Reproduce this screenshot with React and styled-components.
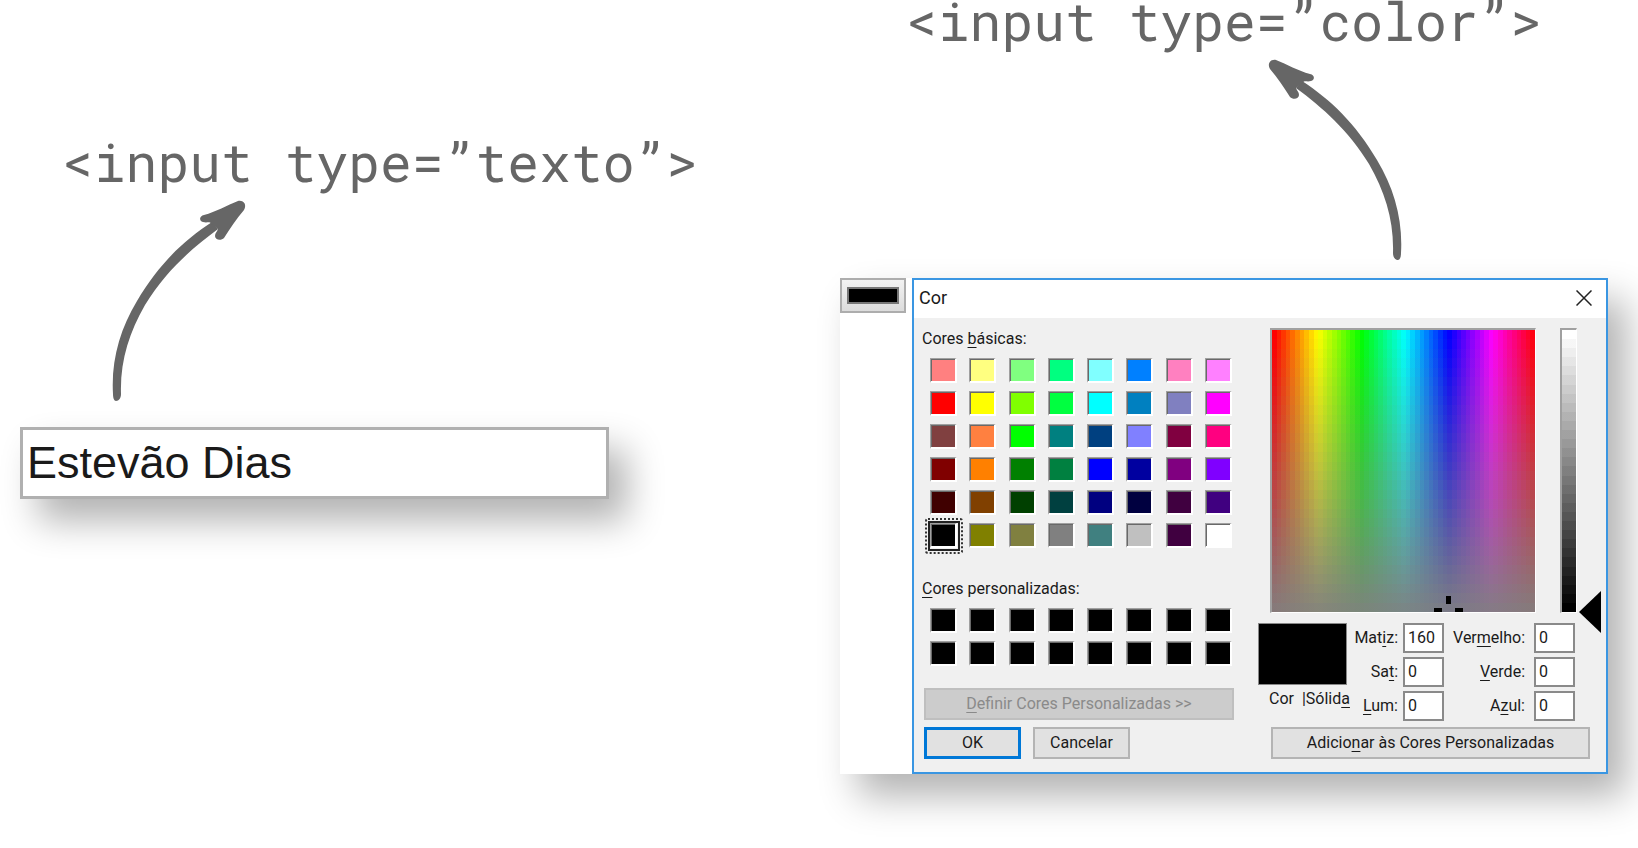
import React, { useState } from "react";
import styled, { createGlobalStyle } from "styled-components";

const GlobalStyle = createGlobalStyle`
  *, *::before, *::after { box-sizing: border-box; }
  body { margin: 0; background: #fff; color: #1a1a1a; }
  button, input { font: inherit; color: inherit; margin: 0; }
`;

const Page = styled.main`
  display: grid;
  grid-template-columns: 589fr 768fr;
  column-gap: 231px;
  align-items: start;
  min-height: 100vh;
  padding: 0 30px 0 20px;
`;

const Example = styled.section`
  min-width: 0;
  padding-top: ${(p) => p.$top}px;
`;

const Code = styled.h2`
  margin: 0 0 9px;
  padding-left: ${(p) => p.$indent}px;
  font: 400 53px/41px "Roboto Mono", "Liberation Mono", monospace;
  color: #666;
  white-space: nowrap;
`;

const ArrowDrawing = styled.svg`
  display: block;
  margin-left: ${(p) => p.$indent}%;
  color: #666;
`;

const shadow = "18px 22px 36px rgba(0, 0, 0, 0.3)";

const NameInput = styled.input`
  display: block;
  width: 100%;
  height: 72px;
  margin-top: 16px;
  padding: 0 4px;
  border: 3px solid #b0b0b0;
  border-radius: 0;
  background: #fff;
  box-shadow: ${shadow};
  font: 400 45px/54px "Liberation Sans", Arial, sans-serif;
  outline: none;
`;

const Picker = styled.div`
  display: flex;
  align-items: flex-start;
  gap: 6px;
  margin-top: 8px;
  background: #fff;
  box-shadow: ${shadow};
  font: 400 16px/20px Roboto, "Segoe UI", sans-serif;
`;

const ColorInput = styled.input`
  appearance: none;
  flex: none;
  width: 66px;
  height: 35px;
  padding: 0;
  border: 2px solid #adadad;
  background: linear-gradient(#f2f2f2, #dcdcdc);
  &::-webkit-color-swatch-wrapper { padding: 7px 5px; }
  &::-webkit-color-swatch { border: 2px solid #777; border-radius: 0; }
`;

const Dialog = styled.div`
  flex: 1;
  min-width: 0;
  border: 2px solid #3a96e2;
  background: #f0f0f0;
`;

const TitleBar = styled.header`
  display: flex;
  align-items: center;
  justify-content: space-between;
  height: 38px;
  padding: 0 14px 2px 5px;
  background: #fff;
`;

const Title = styled.h3`
  margin: 0;
  font: inherit;
  font-size: 18px;
`;

const CloseButton = styled.button`
  display: flex;
  padding: 0;
  border: 0;
  background: none;
`;

const Body = styled.div`
  display: grid;
  grid-template-columns: 310fr 343fr;
  column-gap: 24px;
  padding: 10px 5px 13px 10px;
`;

const Pane = styled.div`
  display: flex;
  flex-direction: column;
  min-width: 0;
`;

const GroupLabel = styled.h4`
  margin: ${(p) => p.$top}px 0 9px -2px;
  font: inherit;
`;

const Swatches = styled.div`
  display: grid;
  grid-template-columns: repeat(8, 27px);
  justify-content: space-between;
  row-gap: 8px;
  padding: 0 2px 0 6px;
`;

const Swatch = styled.button`
  position: relative;
  height: 25px;
  padding: 0;
  border: solid;
  border-width: 1px 2px 2px 1px;
  border-color: #a0a0a0 #fff #fff #a0a0a0;
  background: ${(p) => p.$color};
  box-shadow: inset 1px 1px #696969;
  &[aria-pressed="true"]::before {
    content: "";
    position: absolute;
    inset: -3px -5px -5px -3px;
    border: 2px solid #222;
  }
  &[aria-pressed="true"]::after {
    content: "";
    position: absolute;
    inset: -6px -8px -8px -6px;
    border: 2px dotted #333;
    border-radius: 3px;
  }
`;

const Button = styled.button`
  height: 32px;
  padding: 0 12px;
  border: ${(p) => (p.$primary ? "3px solid #0078d7" : "2px solid #b4b4b4")};
  background: #e1e1e1;
  margin: ${(p) => p.$margin || "0"};
  &:disabled {
    border-color: #bfbfbf;
    background: #ccc;
    color: #8a8a8a;
  }
`;

const Actions = styled.div`
  display: grid;
  grid-template-columns: 97fr 97fr 92fr;
  column-gap: 12px;
  margin-top: 7px;
`;

const Mixer = styled.div`
  display: flex;
  height: 285px;
  padding: 0 24px 0 12px;
`;

const Well = styled.div`
  position: relative;
  border: solid;
  border-width: 2px 1px 1px 2px;
  border-color: #a0a0a0 #fff #fff #a0a0a0;
`;

const Spectrum = styled(Well)`
  flex: 1;
  margin-right: 24px;
  background: ${(p) => p.$fade}, ${(p) => p.$hues};
`;

const Luminance = styled(Well)`
  width: 17px;
  background: ${(p) => p.$steps};
`;

const Crosshair = styled.svg`
  position: absolute;
  right: 72px;
  bottom: 0;
`;

const Pointer = styled.svg`
  position: absolute;
  left: 17px;
  bottom: -21px;
`;

const Values = styled.div`
  display: grid;
  grid-template-columns: 92px 94fr 131fr;
  margin: 10px 26px 6px 0;
`;

const Preview = styled.div`
  width: 89px;
  height: 62px;
  margin-bottom: 4px;
  border: 1px solid #888;
  background: #000;
`;

const PreviewLabel = styled.div`
  padding-left: 11px;
  white-space: pre;
`;

const Fields = styled.div`
  display: grid;
  grid-template-columns: 1fr 41px;
  grid-auto-rows: 30px;
  gap: 4px ${(p) => p.$gap}px;
  align-items: center;
`;

const FieldLabel = styled.label`
  text-align: right;
  white-space: nowrap;
`;

const ValueInput = styled.input`
  width: 100%;
  height: 30px;
  padding: 0 3px 1px;
  border: 2px solid #8a8a8a;
  border-radius: 0;
  background: #fff;
`;

const Key = styled.u`
  text-decoration-thickness: 1px;
  text-underline-offset: 3px;
`;

const basicColors = [
  ["#ff8080", "#ffff80", "#80ff80", "#00ff80", "#80ffff", "#0080ff", "#ff80c0", "#ff80ff"],
  ["#ff0000", "#ffff00", "#80ff00", "#00ff40", "#00ffff", "#0080c0", "#8080c0", "#ff00ff"],
  ["#804040", "#ff8040", "#00ff00", "#008080", "#004080", "#8080ff", "#800040", "#ff0080"],
  ["#800000", "#ff8000", "#008000", "#008040", "#0000ff", "#0000a0", "#800080", "#8000ff"],
  ["#400000", "#804000", "#004000", "#004040", "#000080", "#000040", "#400040", "#400080"],
  ["#000000", "#808000", "#808040", "#808080", "#408080", "#c0c0c0", "#400040", "#ffffff"],
].flat();

const customColors = Array(16).fill("#000000");

// A gradient of flat bands, as the dialog paints its hue, saturation and luminance.
const bands = (direction, count, color) =>
  `linear-gradient(${direction}, ${Array.from({ length: count }, (_, i) =>
    `${color(i / (count - 1))} ${(i * 100) / count}% ${((i + 1) * 100) / count}%`
  ).join(", ")})`;

const hues = bands("to right", 57, (t) => `hsl(${t * 356} 100% 50%)`);
const fade = bands("to bottom", 30, (t) => `rgb(128 128 128 / ${t * 0.95})`);
const luminances = bands("to bottom", 31, (t) => `hsl(0 0% ${(1 - t) * 100}%)`);

function Arrow({ mirrored, indent }) {
  return (
    <ArrowDrawing $indent={indent} width="163" height="220" viewBox="0 0 163 220" aria-hidden="true">
      <g transform={mirrored ? "translate(161 0) scale(-1 1)" : undefined}>
        <path
          d="M22 203C20 170 29 138 46 110C68 73 92 50 121 31L127 38C100 58 75 80 54 114C38 142 29 170 30 203C30 207 28 210 25 210C23 210 22 207 22 203Z"
          fill="currentColor"
        />
        <path
          d="M113 24C125 21 136 14 147 10C153 9 156 14 153 19C145 28 139 38 133 47C130 50 124 49 124 45C124 42 126 41 127 38L119 31.500C117 31 115 32 112 31C108 30 108 25 113 24Z"
          fill="currentColor"
        />
      </g>
    </ArrowDrawing>
  );
}

function Field({ id, label, value }) {
  return (
    <>
      <FieldLabel htmlFor={id}>{label}</FieldLabel>
      <ValueInput id={id} defaultValue={value} />
    </>
  );
}

function ColorDialog() {
  const [selected, setSelected] = useState(40);
  return (
    <Dialog role="dialog" aria-labelledby="dialog-title">
      <TitleBar>
        <Title id="dialog-title">Cor</Title>
        <CloseButton aria-label="Fechar">
          <svg width="16" height="16" viewBox="0 0 16 16" fill="none" stroke="#222" strokeWidth="1.5">
            <path d="M0.500 0.500L15.500 15.500M15.500 0.500L0.500 15.500" />
          </svg>
        </CloseButton>
      </TitleBar>
      <Body>
        <Pane>
          <GroupLabel $top={1}>Cores <Key>b</Key>ásicas:</GroupLabel>
          <Swatches>
            {basicColors.map((color, i) => (
              <Swatch key={i} $color={color} aria-label={color} aria-pressed={i === selected} onClick={() => setSelected(i)} />
            ))}
          </Swatches>
          <GroupLabel $top={31}><Key>C</Key>ores personalizadas:</GroupLabel>
          <Swatches>
            {customColors.map((color, i) => (
              <Swatch key={i} $color={color} aria-label={`Cor personalizada ${i + 1}`} />
            ))}
          </Swatches>
          <Button disabled $margin="22px 0 0"><Key>D</Key>efinir Cores Personalizadas &gt;&gt;</Button>
          <Actions>
            <Button $primary>OK</Button>
            <Button>Cancelar</Button>
          </Actions>
        </Pane>
        <Pane>
          <Mixer>
            <Spectrum $hues={hues} $fade={fade}>
              <Crosshair width="29" height="16" viewBox="0 0 29 16">
                <path d="M0 12H8V16H0ZM12 0H17V8H12ZM21 12H29V16H21Z" />
              </Crosshair>
            </Spectrum>
            <Luminance $steps={luminances}>
              <Pointer width="22" height="42" viewBox="0 0 22 42">
                <path d="M0 21L22 0V42Z" />
              </Pointer>
            </Luminance>
          </Mixer>
          <Values>
            <div>
              <Preview />
              <PreviewLabel>Cor  |Sólid<Key>a</Key></PreviewLabel>
            </div>
            <Fields $gap={5}>
              <Field id="hue" label={<>Mat<Key>i</Key>z:</>} value="160" />
              <Field id="sat" label={<>Sa<Key>t</Key>:</>} value="0" />
              <Field id="lum" label={<><Key>L</Key>um:</>} value="0" />
            </Fields>
            <Fields $gap={9}>
              <Field id="red" label={<>Ver<Key>m</Key>elho:</>} value="0" />
              <Field id="green" label={<><Key>V</Key>erde:</>} value="0" />
              <Field id="blue" label={<>A<Key>z</Key>ul:</>} value="0" />
            </Fields>
          </Values>
          <Button $margin="0 11px 0 13px">Adicio<Key>n</Key>ar às Cores Personalizadas</Button>
        </Pane>
      </Body>
    </Dialog>
  );
}

export default function App() {
  return (
    <>
      <GlobalStyle />
      <Page>
        <Example $top={141}>
          <Code $indent={42}>{"<input type=”texto”>"}</Code>
          <Arrow indent={12} />
          <NameInput type="text" defaultValue="Estevão Dias" aria-label="Nome" />
        </Example>
        <Example $top={0}>
          <Code $indent={66}>{"<input type=”color”>"}</Code>
          <Arrow mirrored indent={55} />
          <Picker>
            <ColorInput type="color" defaultValue="#000000" aria-label="Cor" />
            <ColorDialog />
          </Picker>
        </Example>
      </Page>
    </>
  );
}
